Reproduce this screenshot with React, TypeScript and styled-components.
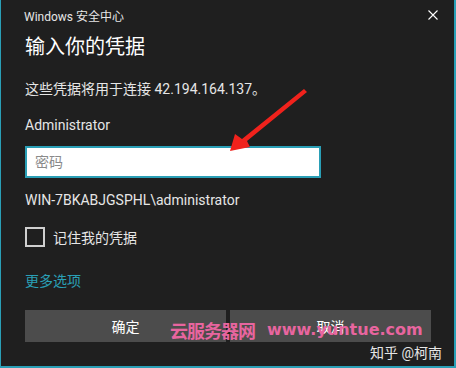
import styled, { createGlobalStyle } from 'styled-components'

const colors = {
  bg: '#1f1f1f',
  accent: '#2a9fb6',
  text: '#ffffff',
  soft: '#e6e6e6',
  button: '#4c4c4c',
  pink: '#e8659f',
}

const GlobalStyle = createGlobalStyle`
  html, body {
    margin: 0;
    padding: 0;
    background: ${colors.bg};
  }
  * { box-sizing: border-box; }
`

const font = `Roboto, 'Noto Sans CJK SC', sans-serif`

const App = () => {
  return (
    <Window>
      <GlobalStyle />
      <TitleBar>
        <TitleText>Windows 安全中心</TitleText>
        <CloseIcon viewBox='0 0 10 10'>
          <path d='M0.5 0.5 L9.5 9.5 M9.5 0.5 L0.5 9.5' stroke='#ffffff' strokeWidth='1.1' />
        </CloseIcon>
      </TitleBar>
      <Content>
        <Heading>输入你的凭据</Heading>
        <Line $top={18}>这些凭据将用于连接 42.194.164.137。</Line>
        <Line $top={16}>Administrator</Line>
        <PasswordInput placeholder='密码' type='password' />
        <Line $top={12}>WIN-7BKABJGSPHL\administrator</Line>
        <CheckRow>
          <Box />
          <CheckLabel>记住我的凭据</CheckLabel>
        </CheckRow>
        <MoreLink>更多选项</MoreLink>
        <Buttons>
          <Button>确定</Button>
          <Button>取消</Button>
        </Buttons>
      </Content>
      <Arrow viewBox='0 0 456 368'>
        <polygon
          points='304,89 307,92 247,141 250,147 230,151 235,134 242,139'
          fill='#f0221c'
        />
      </Arrow>
      <Watermark>
        <WmCn>云服务器网</WmCn>
        <WmEn>www.yuntue.com</WmEn>
      </Watermark>
      <Zhihu>知乎 @柯南</Zhihu>
    </Window>
  )
}

const Window = styled.div`
  position: relative;
  width: 456px;
  height: 368px;
  background: ${colors.bg};
  border-left: 1px solid ${colors.accent};
  border-right: 2px solid ${colors.accent};
  border-bottom: 2px solid ${colors.accent};
  font-family: ${font};
  color: ${colors.text};
  overflow: hidden;
`
const TitleBar = styled.div`
  display: flex;
  align-items: center;
  justify-content: space-between;
  height: 30px;
  padding: 0 16px 0 23px;
`
const TitleText = styled.span`
  font-size: 12px;
  color: ${colors.soft};
`
const CloseIcon = styled.svg`
  width: 10px;
  height: 10px;
`
const Content = styled.div`
  display: flex;
  flex-direction: column;
  align-items: flex-start;
  padding: 0 0 0 24px;
`
const Heading = styled.div`
  margin-top: 3px;
  font-size: 20px;
  line-height: 28px;
`
const Line = styled.div<{ $top: number }>`
  margin-top: ${(p) => p.$top}px;
  font-size: 14px;
  line-height: 20px;
  color: ${colors.soft};
`
const PasswordInput = styled.input`
  margin-top: 11px;
  width: 296px;
  height: 32px;
  border: 2px solid ${colors.accent};
  background: #ffffff;
  padding: 0 8px;
  font-family: ${font};
  font-size: 14px;
  outline: none;
  &::placeholder {
    color: #8a8a8a;
  }
`
const CheckRow = styled.div`
  display: flex;
  align-items: center;
  gap: 8px;
  margin-top: 17px;
  height: 20px;
`
const Box = styled.div`
  width: 20px;
  height: 20px;
  border: 2px solid #cfcfcf;
`
const CheckLabel = styled.span`
  font-size: 14px;
  color: ${colors.soft};
`
const MoreLink = styled.div`
  margin-top: 24px;
  font-size: 14px;
  line-height: 20px;
  color: ${colors.accent};
`
const Buttons = styled.div`
  display: flex;
  gap: 4px;
  margin-top: 19px;
`
const Button = styled.div`
  display: flex;
  align-items: center;
  justify-content: center;
  width: 201px;
  height: 32px;
  background: ${colors.button};
  font-size: 14px;
  color: ${colors.text};
`
const Arrow = styled.svg`
  position: absolute;
  left: -1px;
  top: 0;
  width: 456px;
  height: 368px;
  pointer-events: none;
`
const Watermark = styled.div`
  position: absolute;
  left: 169px;
  top: 319px;
  display: flex;
  align-items: center;
  gap: 12px;
  color: ${colors.pink};
  font-weight: 700;
  line-height: 22px;
`
const WmCn = styled.span`
  font-family: 'Noto Sans CJK SC', sans-serif;
  font-size: 18px;
  letter-spacing: -1px;
`
const WmEn = styled.span`
  font-family: 'DejaVu Sans', sans-serif;
  font-size: 16px;
`
const Zhihu = styled.div`
  position: absolute;
  right: 12px;
  top: 343px;
  font-size: 14px;
  line-height: 20px;
  color: ${colors.soft};
`

export default App
